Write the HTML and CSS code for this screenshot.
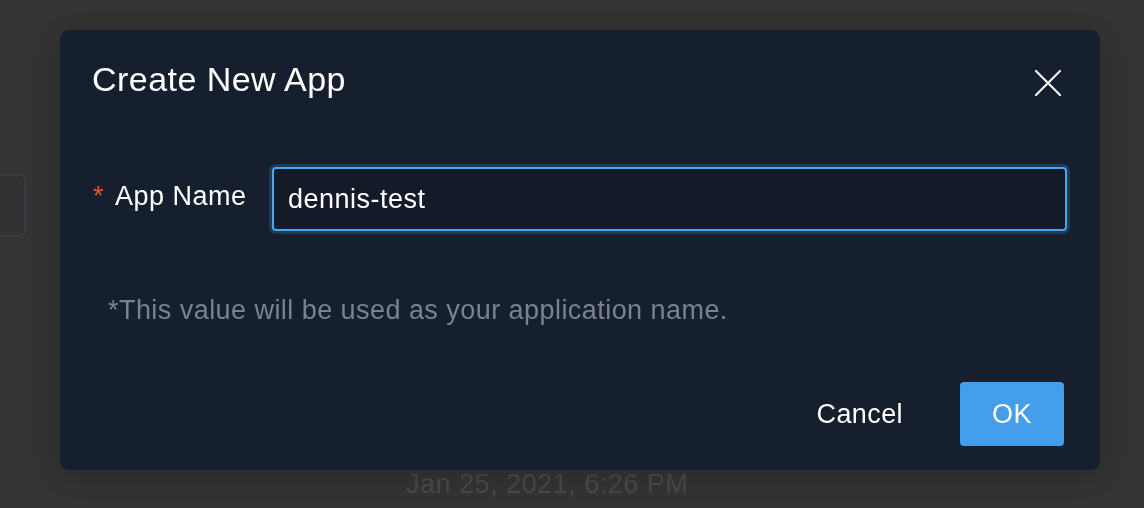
FILE: index.html
```html
<!DOCTYPE html>
<html lang="en">
<head>
<meta charset="utf-8">
<title>Create New App</title>
<link rel="stylesheet" href="styles.css">
</head>
<body>
  <div class="page">
    <div class="bg-field"></div>
    <div class="bg-date">Jan 25, 2021, 6:26 PM</div>
  </div>

  <div class="modal" role="dialog" aria-labelledby="modal-title">
    <div class="modal-header">
      <h2 class="modal-title" id="modal-title">Create New App</h2>
      <button class="close-btn" aria-label="Close">
        <svg width="26" height="26" viewBox="0 0 26 26" fill="none" stroke="#ffffff" stroke-width="2" stroke-linecap="square">
          <path d="M1 1 L25 25 M25 1 L1 25"/>
        </svg>
      </button>
    </div>

    <div class="form-row">
      <label class="form-label" for="app-name"><span class="req">*</span>App Name</label>
      <input class="form-input" id="app-name" type="text" value="dennis-test">
    </div>

    <p class="helper">*This value will be used as your application name.</p>

    <div class="modal-footer">
      <button class="btn btn-cancel">Cancel</button>
      <button class="btn btn-ok">OK</button>
    </div>
  </div>
</body>
</html>
```

FILE: styles.css
```css
* {
  box-sizing: border-box;
}

html, body {
  margin: 0;
  padding: 0;
}

body {
  width: 1144px;
  height: 508px;
  overflow: hidden;
  background: #333333;
  font-family: "Liberation Sans", Arial, Helvetica, sans-serif;
  position: relative;
}

/* background page content (under the modal) */
.page {
  display: flex;
  flex-direction: column;
  padding-top: 174px;
}

.bg-field {
  width: 106px;
  height: 63px;
  margin-left: -80px;
  border: 2px solid #3a3b3e;
  border-radius: 6px;
  background: #313233;
}

.bg-date {
  margin-top: 231px;
  margin-left: 406px;
  font-size: 27px;
  letter-spacing: 0.5px;
  line-height: 32px;
  color: #484848;
  white-space: nowrap;
}

/* modal */
.modal {
  position: fixed;
  left: 60px;
  top: 30px;
  width: 1040px;
  height: 440px;
  background: #151f2d;
  border-radius: 9px;
  box-shadow: 0 6px 24px rgba(0, 0, 0, 0.18);
  display: flex;
  flex-direction: column;
  padding: 29px 36px 24px 32px;
}

.modal-header {
  display: flex;
  justify-content: space-between;
  align-items: flex-start;
}

.modal-title {
  margin: 0;
  font-size: 34px;
  font-weight: normal;
  line-height: 40px;
  color: #ffffff;
  letter-spacing: 0.45px;
}

.close-btn {
  margin-top: 11px;
  margin-right: 3px;
  padding: 0;
  border: 0;
  background: transparent;
  width: 26px;
  height: 26px;
  display: flex;
  cursor: pointer;
}

.form-row {
  display: flex;
  align-items: flex-start;
  margin-top: 68px;
  margin-right: -3px;
}

.form-label {
  flex: none;
  width: 180px;
  font-size: 27px;
  letter-spacing: 0.5px;
  line-height: 58px;
  color: #ffffff;
  white-space: nowrap;
}

.req {
  color: #e5532d;
  margin-right: 11px;
  margin-left: 1px;
}

.form-input {
  flex: 1;
  min-width: 0;
  height: 64px;
  border: 2px solid #4aa6ee;
  border-radius: 4px;
  background: #131b28;
  box-shadow: 0 0 0 3px rgba(66, 158, 232, 0.22);
  padding: 0 14px;
  font-family: "Liberation Sans", Arial, Helvetica, sans-serif;
  font-size: 27px;
  letter-spacing: 0.5px;
  color: #ffffff;
  outline: none;
}

.helper {
  margin: 63px 0 0 16px;
  font-size: 27px;
  letter-spacing: 0.45px;
  line-height: 32px;
  color: #7a8191;
  white-space: nowrap;
}

.modal-footer {
  margin-top: auto;
  display: flex;
  justify-content: flex-end;
  align-items: center;
}

.btn {
  height: 64px;
  border: 0;
  border-radius: 4px;
  font-family: "Liberation Sans", Arial, Helvetica, sans-serif;
  font-size: 27px;
  letter-spacing: 0.4px;
  color: #ffffff;
  cursor: pointer;
}

.btn-cancel {
  background: transparent;
  padding: 0 16px;
  margin-right: 41px;
}

.btn-ok {
  width: 104px;
  background: #449eec;
  padding: 0;
}
```
